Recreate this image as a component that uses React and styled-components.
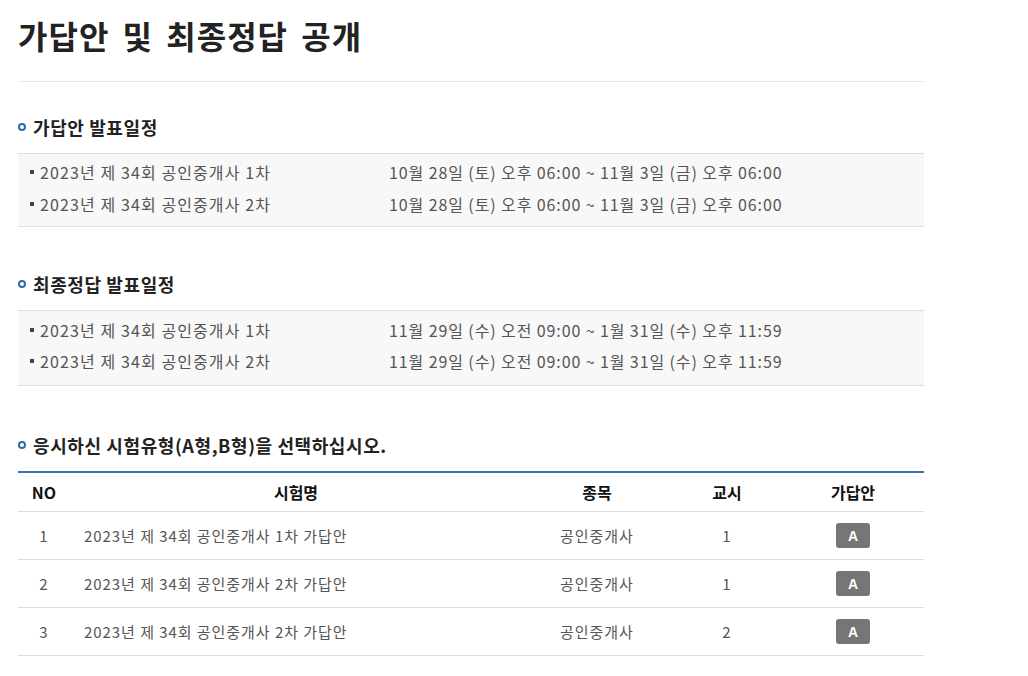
import React from 'react';
import styled, { createGlobalStyle } from 'styled-components';

const GlobalStyle = createGlobalStyle`
  body {
    margin: 0;
    background: #fff;
    font-family: "Noto Sans CJK KR", "Noto Sans", sans-serif;
    color: #333;
  }
`;

const Page = styled.div`
  width: 906px;
  padding: 11px 18px 20px;
`;

const Title = styled.h1`
  margin: 0;
  font-size: 32px;
  line-height: 48px;
  font-weight: 700;
  color: #222;
  padding-bottom: 22px;
  border-bottom: 1px solid #e8e8e8;
  letter-spacing: 1px;
  word-spacing: 5px;
`;

const Section = styled.section`
  margin-top: ${p => p.$gap}px;
`;

const Heading = styled.h2`
  display: flex;
  align-items: center;
  gap: 7px;
  margin: 0 0 13px;
  font-size: 18px;
  line-height: 26px;
  font-weight: 700;
  color: #222;
  letter-spacing: 0.6px;

  &::before {
    content: '';
    width: 4px;
    height: 4px;
    border: 2.5px solid #2e6ca5;
    border-radius: 50%;
    flex: none;
  }
`;

const ScheduleBox = styled.ul`
  list-style: none;
  margin: 0;
  padding: ${p => p.$pad};
  background: #f8f8f8;
  border-top: 1px solid #dedede;
  border-bottom: 1px solid #dedede;
`;

const ScheduleRow = styled.li`
  display: flex;
  align-items: center;
  height: ${p => p.$h}px;
  font-size: 16px;
  color: #555;
  padding-left: 12px;
  letter-spacing: 0.9px;

  &::before {
    content: '';
    width: 4px;
    height: 4px;
    background: #444;
    margin-right: 6px;
    flex: none;
  }
`;

const ExamName = styled.span`
  width: 349px;
  flex: none;
  letter-spacing: 1.1px;
`;

const Table = styled.table`
  width: 100%;
  border-collapse: collapse;
  border-top: 2px solid #3a74b0;
  table-layout: fixed;
  font-size: 15px;
`;

const Th = styled.th`
  height: 38px;
  font-weight: 700;
  font-size: 16px;
  color: #111;
  text-align: center;
  border-bottom: 1px solid #dcdcdc;
  padding: 0;
`;

const Td = styled.td`
  height: 47px;
  color: #555;
  letter-spacing: 0.95px;
  text-align: ${p => p.$left ? 'left' : 'center'};
  padding: 0 0 0 ${p => p.$left ? '14px' : '0'};
  border-bottom: 1px solid #dcdcdc;
`;

const Badge = styled.span`
  display: inline-flex;
  align-items: center;
  justify-content: center;
  width: 34px;
  height: 25px;
  border-radius: 3px;
  background: #767676;
  color: #fff;
  font-size: 14px;
  font-weight: 700;
  letter-spacing: 0;
  font-family: "Liberation Sans", Arial, sans-serif;
  vertical-align: middle;
`;

const prelim = [
  ['2023년 제 34회 공인중개사 1차', '10월 28일 (토) 오후 06:00 ~ 11월 3일 (금) 오후 06:00'],
  ['2023년 제 34회 공인중개사 2차', '10월 28일 (토) 오후 06:00 ~ 11월 3일 (금) 오후 06:00'],
];

const finals = [
  ['2023년 제 34회 공인중개사 1차', '11월 29일 (수) 오전 09:00 ~ 1월 31일 (수) 오후 11:59'],
  ['2023년 제 34회 공인중개사 2차', '11월 29일 (수) 오전 09:00 ~ 1월 31일 (수) 오후 11:59'],
];

const exams = [
  { no: 1, name: '2023년 제 34회 공인중개사 1차 가답안', subject: '공인중개사', period: 1 },
  { no: 2, name: '2023년 제 34회 공인중개사 2차 가답안', subject: '공인중개사', period: 1 },
  { no: 3, name: '2023년 제 34회 공인중개사 2차 가답안', subject: '공인중개사', period: 2 },
];

const Schedule = ({ rows, h, pad }) => (
  <ScheduleBox $pad={pad}>
    {rows.map(([name, date]) => (
      <ScheduleRow key={name} $h={h}>
        <ExamName>{name}</ExamName>
        <span>{date}</span>
      </ScheduleRow>
    ))}
  </ScheduleBox>
);

export default function App() {
  return (
    <Page>
      <GlobalStyle />
      <Title>가답안 및 최종정답 공개</Title>

      <Section $gap={32}>
        <Heading>가답안 발표일정</Heading>
        <Schedule rows={prelim} h={32} pad="2px 0 6px" />
      </Section>

      <Section $gap={44}>
        <Heading>최종정답 발표일정</Heading>
        <Schedule rows={finals} h={31} pad="3px 0 9px" />
      </Section>

      <Section $gap={46}>
        <Heading>응시하신 시험유형(A형,B형)을 선택하십시오.</Heading>
        <Table>
          <colgroup>
            <col style={{ width: 52 }} />
            <col style={{ width: 452 }} />
            <col style={{ width: 150 }} />
            <col style={{ width: 110 }} />
            <col style={{ width: 142 }} />
          </colgroup>
          <thead>
            <tr>
              <Th>NO</Th>
              <Th>시험명</Th>
              <Th>종목</Th>
              <Th>교시</Th>
              <Th>가답안</Th>
            </tr>
          </thead>
          <tbody>
            {exams.map(e => (
              <tr key={e.no}>
                <Td>{e.no}</Td>
                <Td $left>{e.name}</Td>
                <Td>{e.subject}</Td>
                <Td>{e.period}</Td>
                <Td><Badge>A</Badge></Td>
              </tr>
            ))}
          </tbody>
        </Table>
      </Section>
    </Page>
  );
}
